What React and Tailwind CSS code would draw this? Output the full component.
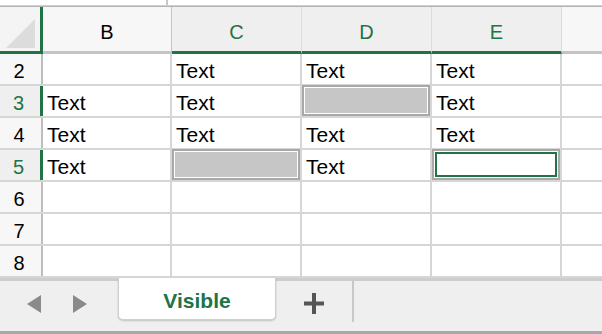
import React from 'react';

const GREEN = 'text-[#217346]';

const rows = [
  { n: 2, sel: false, cells: ['', 'Text', 'Text', 'Text'] },
  { n: 3, sel: true, cells: ['Text', 'Text', null, 'Text'] },
  { n: 4, sel: false, cells: ['Text', 'Text', 'Text', 'Text'] },
  { n: 5, sel: true, cells: ['Text', null, 'Text', 'active'] },
  { n: 6, sel: false, cells: ['', '', '', ''] },
  { n: 7, sel: false, cells: ['', '', '', ''] },
  { n: 8, sel: false, cells: ['', '', '', ''] },
];

const colWidths = ['w-[129px]', 'w-[130px]', 'w-[130px]', 'w-[130px]'];

// celda normal, celda gris seleccionada o celda activa (borde verde)
const Cell = ({ value, width }) => {
  const base = `relative ${width} shrink-0 h-full border-r-2 border-[#d6d6d6] px-[4px] pt-[3px] flex items-center`;
  if (value === null) {
    return (
      <div className={base}>
        <div className="absolute -top-[1px] left-0 right-0 bottom-0 border-2 border-[#a8a8a8] p-[1px] bg-white">
          <div className="w-full h-full bg-[#c6c6c6]" />
        </div>
      </div>
    );
  }
  if (value === 'active') {
    return (
      <div className={base}>
        <div className="absolute -top-[1px] left-0 right-0 bottom-0 border-2 border-[#a8a8a8] p-[1px] bg-white">
          <div className="w-full h-full border-2 border-[#217346]" />
        </div>
      </div>
    );
  }
  return <div className={base}>{value}</div>;
};

export default function App() {
  return (
    <div
      className="w-[602px] h-[334px] bg-white overflow-hidden flex flex-col text-black"
      style={{ fontFamily: '"Liberation Sans", Arial, sans-serif' }}
    >
      {/* resto de la barra de fórmulas */}
      <div className="h-[5px] flex shrink-0">
        <div className="w-[168px] border-r-2 border-[#c8c8c8]" />
      </div>
      <div className="h-[2px] bg-[#b4b4b4] border-t border-[#d0d0d0] shrink-0" />

      {/* cabecera de columnas */}
      <div className="h-[47px] flex shrink-0 text-[20px] bg-[#f7f7f7]">
        <div className="w-[43px] shrink-0 h-full border-r-[3px] border-b-[3px] border-[#217346] bg-[#f4f4f4] flex items-end justify-end pr-[5px] pb-[3px]">
          <svg width="29" height="29" viewBox="0 0 29 29">
            <polygon points="29,0 29,29 0,29" fill="#dcdcdc" />
          </svg>
        </div>
        <div className="w-[129px] shrink-0 h-full border-r border-b-[3px] border-[#c4c4c4] flex items-center justify-center pt-[5px]">
          B
        </div>
        {['C', 'D', 'E'].map((c) => (
          <div
            key={c}
            className={`w-[130px] shrink-0 h-full border-r border-[#dcdcdc] border-b-[3px] border-b-[#217346] bg-[#efefef] flex items-center justify-center pt-[5px] ${GREEN}`}
          >
            {c}
          </div>
        ))}
        <div className="flex-1 h-full border-b-[3px] border-[#c4c4c4]" />
      </div>

      {/* filas */}
      <div className="flex flex-col shrink-0 text-[21px]">
        {rows.map((r) => (
          <div key={r.n} className="h-[32px] flex border-b-2 border-[#d6d6d6]">
            <div
              className={`w-[43px] shrink-0 h-full flex items-center justify-center pr-[3px] pt-[3px] text-[20px] ${
                r.sel
                  ? 'border-r-[3px] border-[#217346] bg-[#efefef] text-[#217346]'
                  : 'border-r-2 border-[#bdbdbd] bg-[#f7f7f7]'
              }`}
            >
              {r.n}
            </div>
            {r.cells.map((v, i) => (
              <Cell key={i} value={v} width={colWidths[i]} />
            ))}
            <div className="flex-1" />
          </div>
        ))}
      </div>

      {/* barra de hojas */}
      <div className="flex-1 flex flex-col bg-[#efefef] border-t-[3px] border-[#cdcdcd]">
        <div className="flex-1 flex items-start">
          <div className="w-[118px] h-[42px] flex items-center pl-[27px] gap-[32px] pt-[4px]">
            <svg width="14" height="18" viewBox="0 0 14 18">
              <polygon points="14,0 14,18 0,9" fill="#8a8a8a" />
            </svg>
            <svg width="14" height="18" viewBox="0 0 14 18">
              <polygon points="0,0 0,18 14,9" fill="#8a8a8a" />
            </svg>
          </div>
          <div className="w-[158px] h-[42px] -mt-[3px] bg-white rounded-b-[5px] border-x border-b border-[#cfcfcf] shadow-[0_1px_2px_rgba(0,0,0,0.2)] flex items-center justify-center pt-[4px]">
            <span className={`text-[21px] font-bold ${GREEN}`}>Visible</span>
          </div>
          <div className="w-[76px] h-[42px] flex items-center justify-center pt-[3px]">
            <svg width="20" height="21" viewBox="0 0 20 21">
              <rect x="8" y="0" width="4" height="21" fill="#555555" />
              <rect x="0" y="8.5" width="20" height="4" fill="#555555" />
            </svg>
          </div>
          <div className="w-[2px] h-[41px] bg-[#c8c8c8]" />
        </div>
        <div className="h-[3px] bg-[#a8a8a8]" />
      </div>
    </div>
  );
}
